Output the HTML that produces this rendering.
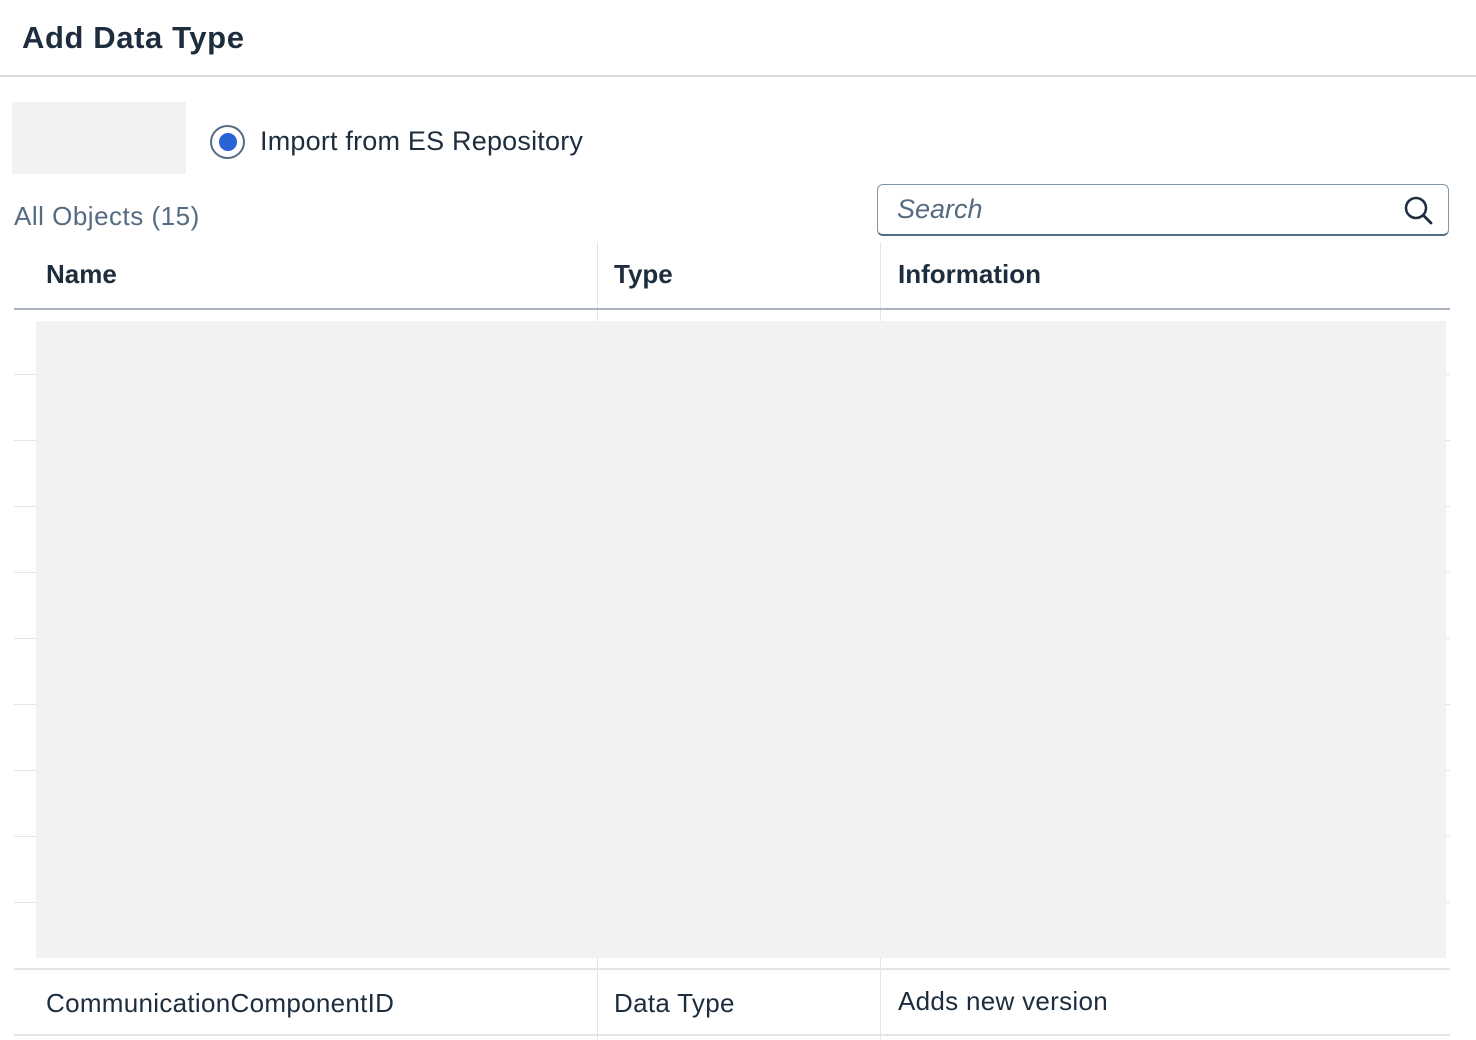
<!DOCTYPE html>
<html><head><style>
body{margin:0;width:1476px;height:1040px;background:#fff;font-family:"Liberation Sans",sans-serif;position:relative;overflow:hidden;color:#1d2d3e}
.a{position:absolute}
</style></head><body>
<div class="a" style="left:22px;top:20px;font-size:31px;font-weight:bold;color:#1d2d3e;letter-spacing:0.6px">Add Data Type</div>
<div class="a" style="left:0;top:75px;width:1476px;height:2px;background:#d9d9d9"></div>
<div class="a" style="left:12px;top:102px;width:174px;height:72px;background:#f2f2f2"></div>
<div class="a" style="left:210px;top:125px;width:35px;height:34px;border:2px solid #556b82;border-radius:50%;box-sizing:border-box"></div>
<div class="a" style="left:219px;top:133px;width:18px;height:18px;border-radius:50%;background:#2a62d3"></div>
<div class="a" style="left:260px;top:126px;font-size:27px;color:#1d2d3e;letter-spacing:0.2px">Import from ES Repository</div>
<div class="a" style="left:14px;top:201px;font-size:26px;color:#556b82;letter-spacing:0.5px">All Objects (15)</div>
<div class="a" style="left:877px;top:184px;width:572px;height:52px;border:1px solid #8396a8;border-bottom:2px solid #556b82;border-radius:6px;box-sizing:border-box"></div>
<div class="a" style="left:897px;top:194px;font-size:27px;font-style:italic;color:#556b82">Search</div>
<svg class="a" style="left:1402px;top:194px" width="32" height="32" viewBox="0 0 32 32"><circle cx="14" cy="14" r="10" fill="none" stroke="#1d2d3e" stroke-width="2.5"/><line x1="21.5" y1="21.5" x2="29" y2="29" stroke="#1d2d3e" stroke-width="2.8" stroke-linecap="round"/></svg>
<div class="a" style="left:597px;top:242px;width:1px;height:798px;background:#e5e5e5"></div>
<div class="a" style="left:880px;top:242px;width:1px;height:798px;background:#e5e5e5"></div>
<div class="a" style="left:46px;top:259px;font-size:26px;font-weight:bold">Name</div>
<div class="a" style="left:614px;top:259px;font-size:26px;font-weight:bold">Type</div>
<div class="a" style="left:898px;top:259px;font-size:26px;font-weight:bold">Information</div>
<div class="a" style="left:14px;top:308px;width:1436px;height:2px;background:#a9b4be"></div>
<div class="a" style="left:14px;top:374px;width:1436px;height:1px;background:#e5e5e5"></div>
<div class="a" style="left:14px;top:440px;width:1436px;height:1px;background:#e5e5e5"></div>
<div class="a" style="left:14px;top:506px;width:1436px;height:1px;background:#e5e5e5"></div>
<div class="a" style="left:14px;top:572px;width:1436px;height:1px;background:#e5e5e5"></div>
<div class="a" style="left:14px;top:638px;width:1436px;height:1px;background:#e5e5e5"></div>
<div class="a" style="left:14px;top:704px;width:1436px;height:1px;background:#e5e5e5"></div>
<div class="a" style="left:14px;top:770px;width:1436px;height:1px;background:#e5e5e5"></div>
<div class="a" style="left:14px;top:836px;width:1436px;height:1px;background:#e5e5e5"></div>
<div class="a" style="left:14px;top:902px;width:1436px;height:1px;background:#e5e5e5"></div>
<div class="a" style="left:14px;top:968px;width:1436px;height:2px;background:#e5e5e5"></div>
<div class="a" style="left:14px;top:1034px;width:1436px;height:2px;background:#e5e5e5"></div>
<div class="a" style="left:36px;top:321px;width:1410px;height:637px;background:#f2f2f2"></div>
<div class="a" style="left:46px;top:988px;font-size:26px;letter-spacing:0.3px">CommunicationComponentID</div>
<div class="a" style="left:614px;top:988px;font-size:26px;letter-spacing:0.3px">Data Type</div>
<div class="a" style="left:898px;top:986px;font-size:26px;letter-spacing:0.3px">Adds new version</div>
</body></html>
